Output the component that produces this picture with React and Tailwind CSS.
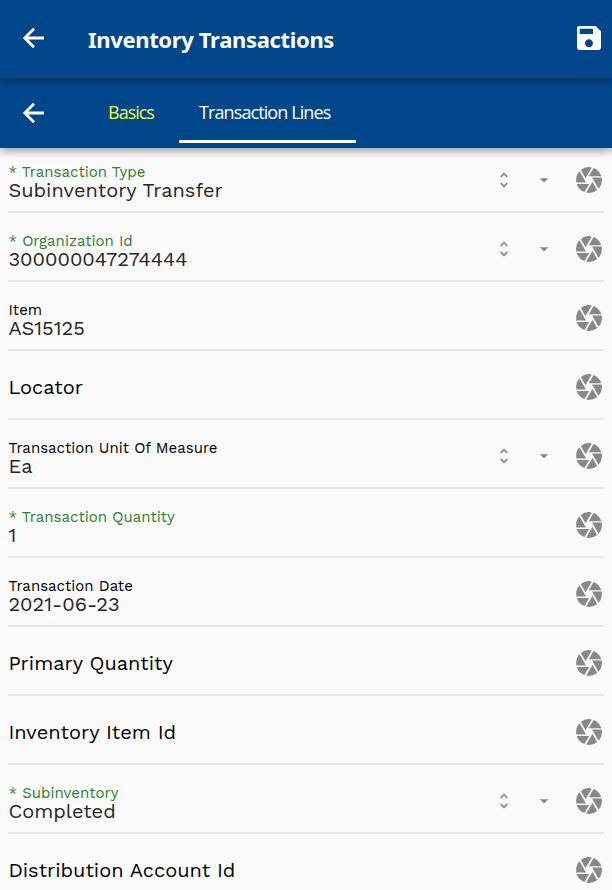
import { MdArrowDropDown, MdCamera, MdSave, MdUnfoldMore } from "react-icons/md";
import { clsx } from "clsx";

const FIELDS = [
  { label: "Transaction Type", value: "Subinventory Transfer", required: true, select: true },
  { label: "Organization Id", value: "300000047274444", required: true, select: true },
  { label: "Item", value: "AS15125" },
  { label: "Locator" },
  { label: "Transaction Unit Of Measure", value: "Ea", select: true },
  { label: "Transaction Quantity", value: "1", required: true },
  { label: "Transaction Date", value: "2021-06-23" },
  { label: "Primary Quantity" },
  { label: "Inventory Item Id" },
  { label: "Subinventory", value: "Completed", required: true, select: true },
  { label: "Distribution Account Id" },
];

function BackArrow() {
  return (
    <svg viewBox="0 0 22 22" className="size-[22px] shrink-0 fill-none stroke-white stroke-[2.8]">
      <path d="M22 11H3.5M12 1.8L2.8 11L12 20.2" />
    </svg>
  );
}

function Field({ label, value, required, select }) {
  return (
    <div className="flex h-[69px] shrink-0 items-center border-b-2 border-[#e2e7eb] pt-1">
      <div className={clsx("flex grow flex-col pl-[0.4px] whitespace-nowrap", value && "pt-1")}>
        <div className={clsx(value ? "text-[15px] leading-[17px]" : "text-xl leading-6", required ? "text-[#2e7d32]" : "text-black", "tracking-[0.02px]")}>
          {required ? "* " : ""}{label}
        </div>
        {value && <div className="text-xl leading-[19px] tracking-[0.02px] text-[#262626]">{value}</div>}
      </div>
      {select && (
        <div className="mr-[19px] flex items-center gap-5 text-[#858585]">
          <MdUnfoldMore className="size-5" />
          <MdArrowDropDown className="size-5" />
        </div>
      )}
      <MdCamera className="mr-[-1px] size-[32px] p-[0.5px] text-[#888]" />
    </div>
  );
}

export default function App() {
  return (
    <div className="flex h-[890px] w-[612px] flex-col overflow-hidden bg-[#fafafa] font-['Work_Sans',Inter,sans-serif]">
      <header className="relative z-20 flex h-[78px] shrink-0 items-center bg-[#00468b] pr-[7px] pb-[2px] pl-[22px] font-['Noto_Sans',sans-serif] shadow-[0_2px_7px_rgba(0,0,0,0.4)]">
        <BackArrow />
        <h1 className="ml-11 grow pt-[2px] text-[22px] leading-8 font-bold tracking-[-0.34px] whitespace-nowrap text-white">Inventory Transactions</h1>
        <MdSave className="size-8 text-white" />
      </header>
      <nav className="relative z-10 flex h-[70px] shrink-0 items-center bg-[#00468b] pl-[22px] font-['Open_Sans',sans-serif] text-[18px] text-white shadow-[0_3px_9px_rgba(0,0,0,0.38)]">
        <BackArrow />
        <div className="ml-11 flex h-[65px] self-start">
          <div className="flex w-[91px] items-center pt-[4px] pl-5 tracking-[-1px] text-[#eeff41]">Basics</div>
          <div className="flex w-[177px] items-center border-b-3 border-white pt-[7px] pl-5 tracking-[-0.9px] whitespace-nowrap">Transaction Lines</div>
        </div>
      </nav>
      <main className="-mt-1 flex grow flex-col overflow-hidden px-2">
        {FIELDS.map((f) => <Field key={f.label} {...f} />)}
      </main>
    </div>
  );
}
